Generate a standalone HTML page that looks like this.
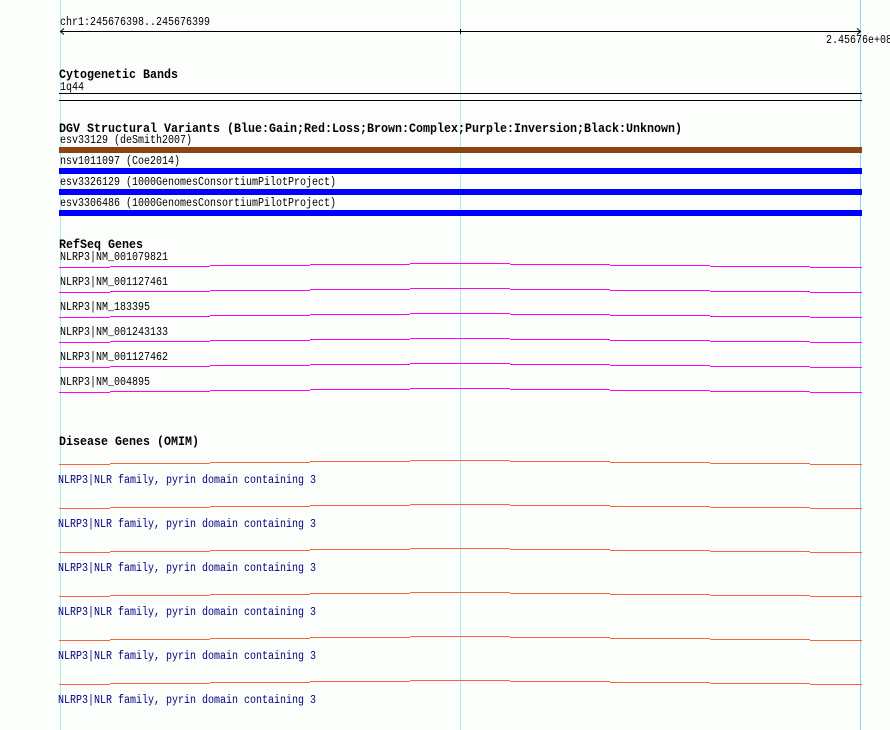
<!DOCTYPE html>
<html><head><meta charset="utf-8"><style>
html,body{margin:0;padding:0;background:#fcfefc;}
svg{display:block}
text{font-family:"Liberation Mono","DejaVu Sans Mono",monospace;font-size:11.5px;fill:#000}
.b{font-weight:bold;font-size:12.5px}
.d{fill:#000080}
</style></head><body>
<svg width="890" height="730" xmlns="http://www.w3.org/2000/svg">
<rect width="890" height="730" fill="#fcfefc"/>
<line x1="60.5" y1="0" x2="60.5" y2="730" stroke="#a8ecf0"/>
<line x1="460.5" y1="0" x2="460.5" y2="730" stroke="#a8ecf0"/>
<line x1="860.5" y1="0" x2="860.5" y2="730" stroke="#88d4ec"/>
<text x="60" y="25" textLength="150" lengthAdjust="spacingAndGlyphs">chr1:245676398..245676399</text>
<line x1="60" y1="31.5" x2="860" y2="31.5" stroke="#000"/>
<path d="M64 28.5 L60.5 31.5 L64 34.5 M857 28.5 L860.5 31.5 L857 34.5" stroke="#000" fill="none"/>
<line x1="460.5" y1="29" x2="460.5" y2="34" stroke="#000"/>
<text x="826" y="43" textLength="66" lengthAdjust="spacingAndGlyphs">2.45676e+08</text>
<text class="b" x="59" y="78" textLength="119" lengthAdjust="spacingAndGlyphs">Cytogenetic Bands</text>
<text x="60" y="90" textLength="24" lengthAdjust="spacingAndGlyphs">1q44</text>
<line x1="59" y1="93.5" x2="862" y2="93.5" stroke="#000"/>
<line x1="59" y1="100.5" x2="862" y2="100.5" stroke="#000"/>
<text class="b" x="59" y="132" textLength="623" lengthAdjust="spacingAndGlyphs">DGV Structural Variants (Blue:Gain;Red:Loss;Brown:Complex;Purple:Inversion;Black:Unknown)</text>
<text x="60" y="143" textLength="132" lengthAdjust="spacingAndGlyphs">esv33129 (deSmith2007)</text>
<rect x="59" y="147" width="803" height="6" fill="#8b4513"/>
<text x="60" y="164" textLength="120" lengthAdjust="spacingAndGlyphs">nsv1011097 (Coe2014)</text>
<rect x="59" y="168" width="803" height="6" fill="#0000ff"/>
<text x="60" y="185" textLength="276" lengthAdjust="spacingAndGlyphs">esv3326129 (1000GenomesConsortiumPilotProject)</text>
<rect x="59" y="189" width="803" height="6" fill="#0000ff"/>
<text x="60" y="206" textLength="276" lengthAdjust="spacingAndGlyphs">esv3306486 (1000GenomesConsortiumPilotProject)</text>
<rect x="59" y="210" width="803" height="6" fill="#0000ff"/>
<text class="b" x="59" y="248" textLength="84" lengthAdjust="spacingAndGlyphs">RefSeq Genes</text>
<text x="60" y="260" textLength="108" lengthAdjust="spacingAndGlyphs">NLRP3|NM_001079821</text>
<text x="60" y="285" textLength="108" lengthAdjust="spacingAndGlyphs">NLRP3|NM_001127461</text>
<text x="60" y="310" textLength="90" lengthAdjust="spacingAndGlyphs">NLRP3|NM_183395</text>
<text x="60" y="335" textLength="108" lengthAdjust="spacingAndGlyphs">NLRP3|NM_001243133</text>
<text x="60" y="360" textLength="108" lengthAdjust="spacingAndGlyphs">NLRP3|NM_001127462</text>
<text x="60" y="385" textLength="90" lengthAdjust="spacingAndGlyphs">NLRP3|NM_004895</text>
<g stroke="#ff00ff" fill="none">
<path d="M59 267.5H110M110 266.5H210M210 265.5H310M310 264.5H410M410 263.5H510M510 264.5H610M610 265.5H710M710 266.5H810M810 267.5H862"/>
<path transform="translate(0,25)" d="M59 267.5H110M110 266.5H210M210 265.5H310M310 264.5H410M410 263.5H510M510 264.5H610M610 265.5H710M710 266.5H810M810 267.5H862"/>
<path transform="translate(0,50)" d="M59 267.5H110M110 266.5H210M210 265.5H310M310 264.5H410M410 263.5H510M510 264.5H610M610 265.5H710M710 266.5H810M810 267.5H862"/>
<path transform="translate(0,75)" d="M59 267.5H110M110 266.5H210M210 265.5H310M310 264.5H410M410 263.5H510M510 264.5H610M610 265.5H710M710 266.5H810M810 267.5H862"/>
<path transform="translate(0,100)" d="M59 267.5H110M110 266.5H210M210 265.5H310M310 264.5H410M410 263.5H510M510 264.5H610M610 265.5H710M710 266.5H810M810 267.5H862"/>
<path transform="translate(0,125)" d="M59 267.5H110M110 266.5H210M210 265.5H310M310 264.5H410M410 263.5H510M510 264.5H610M610 265.5H710M710 266.5H810M810 267.5H862"/>
</g>
<text class="b" x="59" y="445" textLength="140" lengthAdjust="spacingAndGlyphs">Disease Genes (OMIM)</text>
<g stroke="#ff6040" fill="none">
<path d="M59 464.5H110M110 463.5H210M210 462.5H310M310 461.5H410M410 460.5H510M510 461.5H610M610 462.5H710M710 463.5H810M810 464.5H862"/>
<path transform="translate(0,44)" d="M59 464.5H110M110 463.5H210M210 462.5H310M310 461.5H410M410 460.5H510M510 461.5H610M610 462.5H710M710 463.5H810M810 464.5H862"/>
<path transform="translate(0,88)" d="M59 464.5H110M110 463.5H210M210 462.5H310M310 461.5H410M410 460.5H510M510 461.5H610M610 462.5H710M710 463.5H810M810 464.5H862"/>
<path transform="translate(0,132)" d="M59 464.5H110M110 463.5H210M210 462.5H310M310 461.5H410M410 460.5H510M510 461.5H610M610 462.5H710M710 463.5H810M810 464.5H862"/>
<path transform="translate(0,176)" d="M59 464.5H110M110 463.5H210M210 462.5H310M310 461.5H410M410 460.5H510M510 461.5H610M610 462.5H710M710 463.5H810M810 464.5H862"/>
<path transform="translate(0,220)" d="M59 464.5H110M110 463.5H210M210 462.5H310M310 461.5H410M410 460.5H510M510 461.5H610M610 462.5H710M710 463.5H810M810 464.5H862"/>
</g>
<text class="d" x="58" y="483" textLength="258" lengthAdjust="spacingAndGlyphs">NLRP3|NLR family, pyrin domain containing 3</text>
<text class="d" x="58" y="527" textLength="258" lengthAdjust="spacingAndGlyphs">NLRP3|NLR family, pyrin domain containing 3</text>
<text class="d" x="58" y="571" textLength="258" lengthAdjust="spacingAndGlyphs">NLRP3|NLR family, pyrin domain containing 3</text>
<text class="d" x="58" y="615" textLength="258" lengthAdjust="spacingAndGlyphs">NLRP3|NLR family, pyrin domain containing 3</text>
<text class="d" x="58" y="659" textLength="258" lengthAdjust="spacingAndGlyphs">NLRP3|NLR family, pyrin domain containing 3</text>
<text class="d" x="58" y="703" textLength="258" lengthAdjust="spacingAndGlyphs">NLRP3|NLR family, pyrin domain containing 3</text>
</svg>
</body></html>
